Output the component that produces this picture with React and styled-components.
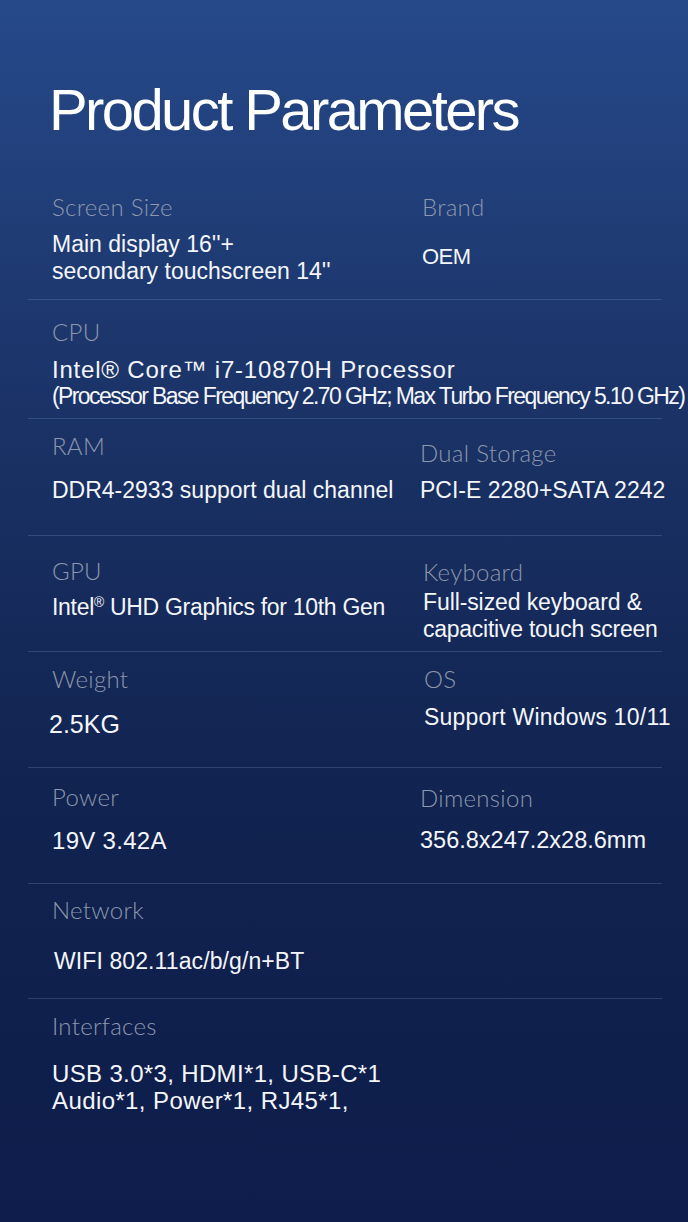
import styled, { createGlobalStyle } from 'styled-components';

const Global = createGlobalStyle`
  html, body { margin: 0; padding: 0; }
  body {
    background: #0e1d4b;
    font-family: "Liberation Sans", Arial, sans-serif;
  }
`;

const Page = styled.div`
  width: 688px;
  min-height: 1222px;
  background: linear-gradient(180deg, #26498a 0%, #1b3367 33%, #112350 65%, #0e1d4b 100%);
  overflow: hidden;
`;

const Title = styled.h1`
  margin: 0;
  padding: 75px 0 35px 49px;
  height: 70px;
  line-height: 70px;
  font-family: "Liberation Sans", Arial, sans-serif;
  font-weight: 400;
  font-size: 58px;
  letter-spacing: -2.6px;
  color: #ffffff;
`;

const Row = styled.div`
  box-sizing: border-box;
  height: ${p => p.h}px;
  margin-left: 28px;
  width: 634px;
  padding-left: 24px;
  display: grid;
  grid-template-columns: 370px 1fr;
  border-bottom: ${p => (p.last ? 'none' : '1px solid rgba(120, 150, 200, 0.28)')};
`;

const Cell = styled.div`
  display: flex;
  flex-direction: column;
  padding-top: ${p => p.pt}px;
  gap: ${p => p.gap}px;
  margin-left: ${p => p.dx || 0}px;
`;

const Label = styled.div`
  font-family: Lato, "Liberation Sans", sans-serif;
  font-weight: 300;
  font-size: 24px;
  letter-spacing: 0.3px;
  line-height: 28px;
  color: #8d97ad;
  white-space: nowrap;
`;

const Value = styled.div`
  font-family: "Liberation Sans", Arial, sans-serif;
  font-size: ${p => p.size || 23}px;
  line-height: 27px;
  letter-spacing: ${p => p.ls || 0}px;
  color: #f4f6fa;
  white-space: pre;
  margin-left: ${p => p.dx || 0}px;
`;

const Sup = styled.sup`
  font-size: 0.6em;
  line-height: 0;
  vertical-align: 0.55em;
`;

const rows = [
  {
    h: 120,
    cells: [
      { label: 'Screen Size', pt: 13, gap: 10, lines: [{ t: "Main display 16''+" }, { t: "secondary touchscreen 14''" }] },
      { label: 'Brand', pt: 13, gap: 22, lines: [{ t: 'OEM', size: 22, ls: -0.5 }] },
    ],
  },
  {
    h: 119,
    cells: [
      {
        label: 'CPU', pt: 18, gap: 10,
        lines: [
          { t: 'Intel® Core™ i7-10870H Processor', size: 24, ls: 0.8 },
          { t: '(Processor Base Frequency 2.70 GHz; Max Turbo Frequency 5.10 GHz)', ls: -1.6 },
        ],
      },
    ],
  },
  {
    h: 117,
    cells: [
      { label: 'RAM', pt: 13, gap: 17, lines: [{ t: 'DDR4-2933 support dual channel' }] },
      { label: 'Dual Storage', pt: 20, gap: 10, dx: -2, lines: [{ t: 'PCI-E 2280+SATA 2242' }] },
    ],
  },
  {
    h: 116,
    cells: [
      { label: 'GPU', pt: 21, gap: 9, lines: [{ t: 'Intel', sup: '®', rest: ' UHD Graphics for 10th Gen', ls: -0.3 }] },
      { label: 'Keyboard', pt: 22, gap: 3, dx: 1, lines: [{ t: 'Full-sized keyboard &', ls: -0.1 }, { t: 'capacitive touch screen', ls: -0.25 }] },
    ],
  },
  {
    h: 116,
    cells: [
      { label: 'Weight', pt: 13, gap: 18, lines: [{ t: '2.5KG', dx: -3, size: 25 }] },
      { label: 'OS', pt: 13, gap: 11, dx: 2, lines: [{ t: 'Support Windows 10/11', ls: 0.2 }] },
    ],
  },
  {
    h: 116,
    cells: [
      { label: 'Power', pt: 15, gap: 16, lines: [{ t: '19V 3.42A', size: 24, ls: 0.3 }] },
      { label: 'Dimension', pt: 16, gap: 15, dx: -2, lines: [{ t: '356.8x247.2x28.6mm', size: 23.5 }] },
    ],
  },
  {
    h: 115,
    cells: [
      { label: 'Network', pt: 12, gap: 24, lines: [{ t: 'WIFI 802.11ac/b/g/n+BT', ls: 0.1, dx: 2 }] },
    ],
  },
  {
    h: 223,
    last: true,
    cells: [
      {
        label: 'Interfaces', pt: 13, gap: 20,
        lines: [
          { t: 'USB 3.0*3, HDMI*1, USB-C*1', size: 24, ls: 0.35 },
          { t: 'Audio*1, Power*1, RJ45*1,', size: 24, ls: 0.4 },
        ],
      },
    ],
  },
];

export default function App() {
  return (
    <Page>
      <Global />
      <Title>Product Parameters</Title>
      {rows.map((row, i) => (
        <Row key={i} h={row.h} last={row.last}>
          {row.cells.map(cell => (
            <Cell key={cell.label} pt={cell.pt} gap={cell.gap} dx={cell.dx}>
              <Label>{cell.label}</Label>
              <div>
                {cell.lines.map(line => (
                  <Value key={line.t} size={line.size} ls={line.ls} dx={line.dx}>
                    {line.t}
                    {line.sup && <Sup>{line.sup}</Sup>}
                    {line.rest}
                  </Value>
                ))}
              </div>
            </Cell>
          ))}
        </Row>
      ))}
    </Page>
  );
}
